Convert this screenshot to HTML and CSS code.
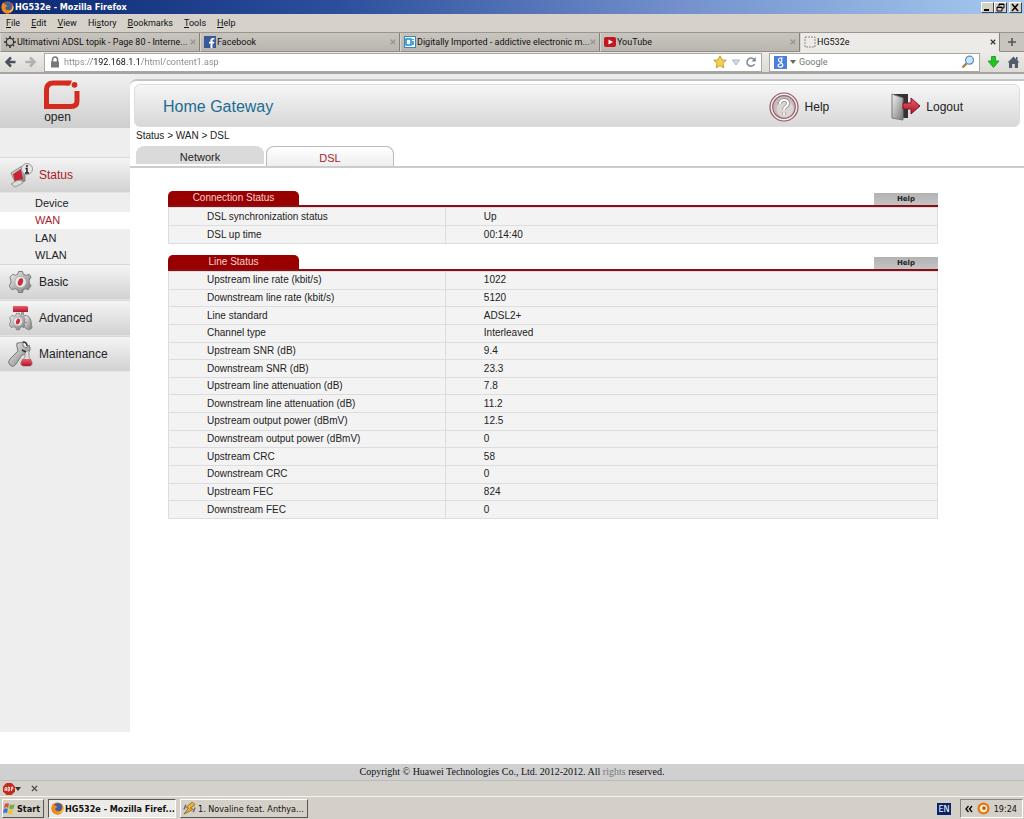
FILE: index.html
```html
<!DOCTYPE html>
<html lang="en">
<head>
<meta charset="utf-8">
<title>HG532e</title>
<link rel="stylesheet" href="styles.css">
</head>
<body>
<svg class="defs" aria-hidden="true">
  <defs>
    <linearGradient id="metal" x1="0" y1="0" x2="1" y2="1"><stop offset="0" stop-color="#f4f4f4"/><stop offset="1" stop-color="#777"/></linearGradient>
    <linearGradient id="red" x1="0" y1="0" x2="0" y2="1"><stop offset="0" stop-color="#e8606c"/><stop offset="1" stop-color="#b01428"/></linearGradient>
    <symbol id="firefox" viewBox="0 0 16 16">
      <circle cx="8" cy="8" r="7.5" fill="#d9661a"/>
      <circle cx="8.5" cy="6.5" r="5" fill="#3f5f9e"/>
      <path d="M1 5C0 12 4 15.500 8 15.500s8-4 7-9c0 4-3 5-5 5-4 0-6-2-4-4l2-1-2-2C4 4 3 3 3 1.500 1.500 3 1 5 1 5z" fill="#f08a1c"/>
      <path d="M14 4c1 5-1 8-5 9 5 1 7-3 6-7z" fill="#ffd34a"/>
    </symbol>
    <symbol id="close" viewBox="0 0 8 8"><path d="M1 1l6 6M7 1L1 7" stroke="currentColor" stroke-width="1.500"/></symbol>
    <symbol id="gear" viewBox="0 0 24 24">
      <path d="M10 1h4l1 3 3 1 3-1 2 3-2 3v3l2 3-3 4-3-1-2 1-1 3h-4l-1-3-3-1-3 1-3-4 2-3v-3L1 7l3-3 3 1 2-1z" fill="url(#metal)" stroke="#777"/>
      <circle cx="12" cy="12" r="6" fill="#e9e9e9" stroke="#aaa"/>
      <ellipse cx="12" cy="12" rx="2.600" ry="4" fill="#c4303e" transform="rotate(18 12 12)"/>
    </symbol>
  </defs>
</svg>

<header class="browser">
  <div class="titlebar">
    <svg class="ico"><use href="#firefox"/></svg>
    <span class="title">HG532e - Mozilla Firefox</span>
    <div class="winbtns">
      <button aria-label="Minimize"><svg viewBox="0 0 11 9"><path d="M2 7h5" stroke="#000" stroke-width="2"/></svg></button>
      <button aria-label="Restore"><svg viewBox="0 0 11 9"><path d="M4 3V1h5v4H7M2 4h5v4H2zM2 4.500h5M4 1.500h5" fill="none" stroke="#000"/></svg></button>
      <button aria-label="Close"><svg viewBox="0 0 11 9"><path d="M2 1l6 7M8 1L2 8" stroke="#000" stroke-width="1.500"/></svg></button>
    </div>
  </div>
  <nav class="menubar">
    <button><u>F</u>ile</button><button><u>E</u>dit</button><button><u>V</u>iew</button><button>Hi<u>s</u>tory</button><button><u>B</u>ookmarks</button><button><u>T</u>ools</button><button><u>H</u>elp</button>
  </nav>
  <div class="tabs">
    <div class="tab"><svg class="fav" viewBox="0 0 12 12"><circle cx="6" cy="6" r="3.700" fill="none" stroke="#333" stroke-width="1.300"/><path d="M6 0v2M6 10v2M0 6h2M10 6h2M2 2l1 1M9 9l1 1M10 2L9 3M3 9l-1 1" stroke="#333" stroke-width="1.600"/></svg><button class="name">Ultimativni ADSL topik - Page 80 - Interne...</button><button class="x" aria-label="Close tab"><svg><use href="#close"/></svg></button></div>
    <div class="tab"><svg class="fav" viewBox="0 0 12 12"><rect width="12" height="12" fill="#3b5998"/><path d="M8.500 12V7.500H10l.3-1.800H8.500V4.500c0-.6.300-1 1-1h1V2H9C7.300 2 6.500 3 6.500 4.300v1.400H5v1.800h1.500V12z" fill="#fff"/></svg><button class="name">Facebook</button><button class="x" aria-label="Close tab"><svg><use href="#close"/></svg></button></div>
    <div class="tab"><svg class="fav" viewBox="0 0 12 12"><rect x=".5" y=".5" width="11" height="11" fill="#fff" stroke="#2b8cc8"/><path d="M2 3h5v6H2zM9 3v1M9 5v4" fill="none" stroke="#2b8cc8" stroke-width="1.600"/></svg><button class="name">Digitally Imported - addictive electronic m...</button><button class="x" aria-label="Close tab"><svg><use href="#close"/></svg></button></div>
    <div class="tab"><svg class="fav" viewBox="0 0 12 12"><rect y="1" width="12" height="10" rx="2" fill="#c1171d"/><path d="M4.500 3.500v5L9 6z" fill="#fff"/></svg><button class="name">YouTube</button><button class="x" aria-label="Close tab"><svg><use href="#close"/></svg></button></div>
    <div class="tab active"><svg class="fav" viewBox="0 0 12 12"><rect x="1" y="1" width="10" height="10" fill="none" stroke="#888" stroke-dasharray="2 1"/></svg><button class="name">HG532e</button><button class="x" aria-label="Close tab"><svg><use href="#close"/></svg></button></div>
    <button class="newtab" aria-label="New tab"><svg viewBox="0 0 10 10"><path d="M5 1v8M1 5h8" stroke="#555" stroke-width="1.600"/></svg></button>
  </div>
  <div class="navbar">
    <button class="tool" aria-label="Back"><svg viewBox="0 0 12 12"><path d="M6.500 1.500L2 6l4.500 4.500M2 6h9" fill="none" stroke="#48525e" stroke-width="2.500"/></svg></button>
    <button class="tool" aria-label="Forward"><svg viewBox="0 0 12 12"><path d="M5.500 1.500L10 6l-4.500 4.500M10 6H1" fill="none" stroke="#b0b0ae" stroke-width="2.500"/></svg></button>
    <div class="field url">
      <svg viewBox="0 0 12 12"><path d="M3.500 6V3.500a2.500 2.500 0 0 1 5 0V6" fill="none" stroke="#777" stroke-width="1.500"/><rect x="2" y="5.500" width="8" height="6" fill="#777"/></svg>
      <input type="text" aria-label="Address" value="https://192.168.1.1/html/content1.asp">
      <svg class="star" viewBox="0 0 14 14"><path d="M7 .8l1.900 4 4.400.5-3.300 3 .9 4.500L7 10.600l-3.900 2.200.9-4.500-3.300-3 4.400-.5z" fill="#f8d04c" stroke="#b89020" stroke-width=".8"/></svg>
      <svg viewBox="0 0 12 12"><path d="M2.500 4h7L6 9z" fill="#dde" stroke="#9aa4b0" stroke-width=".8"/></svg>
      <svg viewBox="0 0 12 12"><path d="M9.500 8A4 4 0 1 1 9 3.500" fill="none" stroke="#7c8894" stroke-width="1.500"/><path d="M10.800 1v4.500H6.500z" fill="#7c8894"/></svg>
    </div>
    <div class="field search">
      <svg class="goo" viewBox="0 0 13 13"><rect width="13" height="13" fill="#4a7fdc"/><path d="M8.800 2H6.500a2 2 0 1 0 0 4c1.500 0 2-2.500.5-4M6.500 6c0 1 2.300 1.200 2.300 3 0 2.700-4.800 2.700-4.800.5S7 8 7 7.500" fill="none" stroke="#fff" stroke-width="1.200"/></svg>
      <svg class="dd" viewBox="0 0 6 6"><path d="M0 1h6L3 5z" fill="#666"/></svg>
      <input type="text" aria-label="Search" placeholder="Google">
      <svg class="star" viewBox="0 0 14 14"><path d="M6 8L1.500 12.500" stroke="#b07a48" stroke-width="2.400"/><circle cx="8.500" cy="5.200" r="4" fill="#cbe6fa" stroke="#5d8fc0" stroke-width="1.200"/></svg>
    </div>
    <button class="tool" aria-label="Downloads"><svg viewBox="0 0 12 12"><path d="M4 .5h4V5h3.500L6 11.500.5 5H4z" fill="#23c423" stroke="#149514" stroke-width=".8"/></svg></button>
    <button class="tool" aria-label="Home"><svg viewBox="0 0 12 12"><path d="M6 .5L0 6.500h1.500V12h3.200V8h2.600v4h3.200V6.500H12L10 4.500V1H8.500v2z" fill="#525c68"/></svg></button>
  </div>
</header>

<div class="page">
  <aside class="side">
    <div class="logo">
      <svg viewBox="0 0 38 31"><path d="M25.500 3H10.500Q3.500 3 3.500 10V26.500H28Q34 26.500 34 21V11" fill="none" stroke="#d52b1e" stroke-width="5"/><path d="M25 .5h4l-2 5h-4z" fill="#d52b1e"/><circle cx="31.500" cy="4.800" r="2.900" fill="#d52b1e"/></svg>
      <span>open</span>
    </div>
    <nav class="nav">
      <a class="main on" href="#"><svg viewBox="0 0 26 26"><path d="M3 11l11-7 3 3v12L8 22z" fill="url(#metal)" stroke="#888"/><path d="M5 12l8-5 2 10-8 3z" fill="#c42638"/><path d="M8 19l-5 3 4 3 8-4-2-3z" fill="#ddd" stroke="#999"/><circle cx="19" cy="7" r="5.500" fill="#e6e6e6" stroke="#999"/><path d="M19 3v2M17.500 6.500H19V11M17 11h4" stroke="#222" stroke-width="1.500" fill="none"/></svg>Status</a>
      <div class="sub"><a href="#">Device</a><a class="on" href="#">WAN</a><a href="#">LAN</a><a href="#">WLAN</a></div>
      <a class="main" href="#"><svg viewBox="0 0 26 26"><use href="#gear" x="1" y="1" width="23" height="24"/></svg>Basic</a>
      <a class="main" href="#"><svg viewBox="0 0 26 26"><use href="#gear" x="1" y="7" width="18" height="19"/><path d="M5 1h14q2 1 1 3v3H5z" fill="url(#red)"/><path d="M13 7h3v3h-3z" fill="#999"/><path d="M16 11q5-2 7 5l1 7-3 2-4-2-1-5 3-1" fill="url(#metal)" stroke="#888"/></svg>Advanced</a>
      <a class="main" href="#"><svg viewBox="0 0 26 26"><path d="M11 2l4-1v4l3 2 3-3q3 5-2 9l-5 1-6 9q-3 4-6 1-3-3 0-6l8-8q-2-6-1-8z" fill="url(#metal)" stroke="#777"/><path d="M17 10h4v6l3 5q1 4-3 4h-5q-4 0-3-4l4-5z" fill="#ddd" stroke="#999"/><path d="M14 18h9l1 4q0 3-3 3h-5q-3 0-3-3z" fill="url(#red)"/><path d="M15 1q4 0 4 4M14 9l4 2" stroke="#333" stroke-width="1.600" fill="none"/></svg>Maintenance</a>
    </nav>
  </aside>

  <main class="panel">
    <div class="banner">
      <h1>Home Gateway</h1>
      <a href="#"><svg viewBox="0 0 30 30"><circle cx="15" cy="15" r="14" fill="#f7eff0" stroke="#8d5a60" stroke-width="1.200"/><circle cx="15" cy="15" r="11.300" fill="#c8babb" stroke="#94666b" stroke-width="1.200"/><circle cx="16" cy="17" r="8.500" fill="#dcd4d5"/><path d="M11 12q0-4 4-4t4 3.500q0 2-2.500 3.500-1.500 1-1.500 3M15 20.500v2.200" fill="none" stroke="#888" stroke-width="3.600"/><path d="M11 12q0-4 4-4t4 3.500q0 2-2.500 3.500-1.500 1-1.500 3M15 20.500v2.200" fill="none" stroke="#fff" stroke-width="2.200"/></svg>Help</a>
      <a href="#"><svg viewBox="-1 0 30 30"><path d="M1 2h16v24H1z" fill="#333"/><path d="M1 2l11 4v22L1 26z" fill="url(#metal)" stroke="#777"/><path d="M12 11h8V6l9 8-9 8v-5h-8z" fill="url(#red)" stroke="#7d1824"/></svg>Logout</a>
    </div>
    <p class="crumbs">Status &gt; WAN &gt; DSL</p>
    <nav class="ptabs"><a href="#">Network</a><a class="on" href="#">DSL</a></nav>

    <div class="content">
      <section>
        <div class="head"><h2>Connection Status</h2><button>Help</button></div>
        <table class="short">
          <tr><th scope="row">DSL synchronization status</th><td>Up</td></tr>
          <tr><th scope="row">DSL up time</th><td>00:14:40</td></tr>
        </table>
      </section>
      <section>
        <div class="head"><h2>Line Status</h2><button>Help</button></div>
        <table class="long">
          <tr><th scope="row">Upstream line rate (kbit/s)</th><td>1022</td></tr>
          <tr><th scope="row">Downstream line rate (kbit/s)</th><td>5120</td></tr>
          <tr><th scope="row">Line standard</th><td>ADSL2+</td></tr>
          <tr><th scope="row">Channel type</th><td>Interleaved</td></tr>
          <tr><th scope="row">Upstream SNR (dB)</th><td>9.4</td></tr>
          <tr><th scope="row">Downstream SNR (dB)</th><td>23.3</td></tr>
          <tr><th scope="row">Upstream line attenuation (dB)</th><td>7.8</td></tr>
          <tr><th scope="row">Downstream line attenuation (dB)</th><td>11.2</td></tr>
          <tr><th scope="row">Upstream output power (dBmV)</th><td>12.5</td></tr>
          <tr><th scope="row">Downstream output power (dBmV)</th><td>0</td></tr>
          <tr><th scope="row">Upstream CRC</th><td>58</td></tr>
          <tr><th scope="row">Downstream CRC</th><td>0</td></tr>
          <tr><th scope="row">Upstream FEC</th><td>824</td></tr>
          <tr><th scope="row">Downstream FEC</th><td>0</td></tr>
        </table>
      </section>
    </div>
  </main>
</div>

<footer class="copy">Copyright © Huawei Technologies Co., Ltd. 2012-2012. All <span>rights</span> reserved.</footer>

<div class="addons">
  <button aria-label="Adblock Plus"><svg viewBox="0 0 12 12"><path d="M3.500 0h5L12 3.500v5L8.500 12h-5L0 8.500v-5z" fill="#c62a1c"/><path d="M2 8V5q1-2 1.700 0v3M2 6.500h1.700M5.200 8V4h1l.6 1-.6 1 .8 1-.8 1zM8.500 8V4h1.300v2H8.500" fill="none" stroke="#fff" stroke-width=".8"/></svg><svg class="dd" viewBox="0 0 6 6"><path d="M0 1h6L3 5z" fill="#333"/></svg></button>
  <button aria-label="Close add-on bar"><svg class="sx"><use href="#close"/></svg></button>
</div>

<div class="taskbar">
  <button class="start"><svg viewBox="0 0 14 14"><path d="M2 2q2.500-1.500 4.500 0L5.500 6.500Q3.500 5 1 6.500z" fill="#e0522c"/><path d="M7.500 2.500q2 1.500 5 0L11.500 7q-3 1.500-5 0z" fill="#6cb33f"/><path d="M.8 7.500q2.500-1.500 4.500 0L4.300 12Q2.300 10.500 0 12z" fill="#3c74d4"/><path d="M6.300 8q2 1.500 5 0l-1 4.500q-3 1.500-5 0z" fill="#f4c430"/></svg>Start</button>
  <button class="task on"><svg><use href="#firefox"/></svg>HG532e - Mozilla Firef...</button>
  <button class="task"><svg viewBox="0 0 14 14"><path d="M10 0L3 6l3 .5L1 13l10-5-3-1.500L13 3z" fill="#f0b030" stroke="#7a5a20" stroke-width=".8"/><path d="M3 3L1 8M11 11l2-5" stroke="#667" stroke-width="1.500"/></svg>1. Novaline feat. Anthya...</button>
  <span class="lang">EN</span>
  <div class="tray"><svg class="chev" viewBox="0 0 8 8"><path d="M3.500 1L1 4l2.500 3M7 1L4.500 4 7 7" fill="none" stroke="#000" stroke-width="1.300"/></svg><svg viewBox="0 0 14 14"><circle cx="7" cy="7" r="6.500" fill="#e07818"/><circle cx="7" cy="7" r="4" fill="#fff0c8"/><circle cx="7.500" cy="6.500" r="2" fill="#c45a10"/></svg><time>19:24</time></div>
</div>
</body>
</html>
```
FILE: styles.css
```css
* { box-sizing: border-box; }
body {
  margin: 0;
  min-height: 100vh;
  display: flex;
  flex-direction: column;
  background: #fff;
  color: #222;
  font: 10px/12px "Liberation Sans", Arial, sans-serif;
}
button, input { font: inherit; color: inherit; border: 0; padding: 0; margin: 0; background: none; }
a { color: inherit; text-decoration: none; }
svg { display: block; flex: none; }
.defs { position: absolute; width: 0; height: 0; }

.browser { font: 9px/12px Roboto, Tahoma, sans-serif; color: #111; background: #d6d2ca; }
.taskbar { font: 9px/12px "DejaVu Sans Condensed", Tahoma, sans-serif; color: #111; }
.titlebar {
  display: flex; align-items: center; height: 14px; padding: 0 2px 0 1px;
  background: linear-gradient(to right, #0c2874, #2c4f9c 33%, #7390cc 66%, #a6caf0);
  color: #fff; font: bold 9px/12px "DejaVu Sans Condensed", Tahoma, sans-serif;
}
.ico { width: 13px; height: 13px; margin-right: 1px; }
.title { flex: 1; }
.winbtns { display: flex; }
.winbtns button { width: 13px; height: 11px; background: #d4d0c8; border: 1px solid; border-color: #fff #444 #444 #fff; }
.winbtns button:last-child { margin-left: 2px; }
.winbtns svg { width: 11px; height: 9px; }
.menubar { display: flex; gap: 11px; height: 18px; padding: 0 6px; }

.tabs { display: flex; height: 20px; border-top: 1px solid #99968f; }
.tab {
  flex: 1; min-width: 0; display: flex; align-items: center; padding: 0 3px;
  background: linear-gradient(#c8c5be, #b9b6af);
  border-right: 1px solid #85827c; border-bottom: 1px solid #908d87; border-left: 1px solid #d8d5ce;
}
.fav { width: 12px; height: 12px; margin-right: 1px; }
.name { flex: 1; min-width: 0; text-align: left; white-space: nowrap; }
.x { color: #96938d; }
.x svg { width: 6px; height: 6px; }
.tab.active { background: #ecebe8; border-bottom-color: #ecebe8; }
.active .x { color: #333; }
.newtab { width: 24px; display: grid; place-items: center; background: #c8c5be; border-bottom: 1px solid #908d87; }
.newtab svg { width: 10px; height: 10px; }
.navbar {
  display: flex; align-items: center; gap: 7px; height: 22px; padding: 0 4px;
  background: linear-gradient(#ecebe8, #dddbd6); border-bottom: 2px solid #a6a4a0;
}
.tool svg { width: 13px; height: 12px; }
.field { display: flex; align-items: center; gap: 3px; height: 19px; padding: 0 4px; background: #fff; border: 1px solid #aaa7a1; }
.field svg { width: 12px; height: 12px; }
.field .star { width: 14px; height: 14px; }
.field .dd, .dd { width: 6px; height: 6px; }
.field input { flex: 1; min-width: 0; height: 14px; outline: 0; }
.url { flex: 1; }
.url input {
  color: transparent;
  background: linear-gradient(to right, #888 28px, #111 28px, #111 76px, #888 76px);
  background-clip: text; -webkit-background-clip: text;
}
.search { width: 211px; }
.search .goo { width: 13px; height: 13px; }
.search input::placeholder { color: #777; opacity: 1; }

.page { flex: 1; display: flex; padding-bottom: 32px; background: linear-gradient(#ececec, #ececec) top / 100% 12px no-repeat #fff; }
.side { width: 130px; background: #eee; }
.logo {
  display: flex; flex-direction: column; align-items: center; height: 54px; padding: 6px 7px 0 0;
  background: linear-gradient(#f0f0f0, #cecece); font-size: 12px;
}
.logo svg { width: 38px; height: 31px; }
.logo span { margin-right: 8px; }
.nav { margin-top: 29px; }
.main {
  display: flex; align-items: center; gap: 5px; height: 36px; padding-left: 8px;
  background: linear-gradient(#f4f4f4, #d2d2d2); border-bottom: 1px solid #e4e4e4;
  border-top: 1px solid #d8d8d8; font-size: 12px;
}
.main svg { width: 26px; height: 26px; }
.main.on, .sub .on { color: #a81c2c; }
.sub { display: flex; flex-direction: column; height: 71px; padding-top: 1px; font-size: 11px; }
.sub a { flex: 1; display: flex; align-items: center; padding-left: 35px; }
.sub .on { background: #fff; }

.panel { flex: 1; min-width: 0; margin-top: 5px; padding: 3px 0 0; background: #fff; border-top: 2px solid #c4c4c4; border-top-left-radius: 7px; }
.banner {
  display: flex; align-items: center; height: 43px; margin: 0 4px 0 4px; padding: 3px 56px 0 28px;
  border: 1px solid #dcdcdc; border-radius: 6px; background: linear-gradient(#f6f6f6, #d8d8d8); font-size: 12px;
}
.banner h1 { flex: 1; margin: 0; font: 16px/20px "Liberation Sans", Arial, sans-serif; color: #1c6c94; }
.banner a { display: flex; align-items: center; gap: 6px; }
.banner a + a { margin-left: 61px; }
.banner svg { width: 30px; height: 30px; }
.crumbs { margin: 3px 6px 4px; }
.ptabs { display: flex; gap: 2px; height: 22px; padding-left: 6px; border-bottom: 2px solid #ccc; font-size: 11px; }
.ptabs a { width: 128px; height: 18px; display: grid; place-items: center; padding-top: 4px; background: #dadada; border-radius: 8px 8px 0 0; }
.ptabs .on { height: 20px; padding-top: 3px; color: #a81c2c; background: linear-gradient(#fff, #eee); border: 1px solid #bbb; border-bottom: 0; }

.content { margin: 24px 86px 0 38px; }
section { margin-bottom: 12px; }
.head { display: flex; justify-content: space-between; align-items: flex-end; height: 15px; border-bottom: 2px solid #8c0d16; }
.head h2 { width: 131px; height: 14px; margin: 0; font: 10px/14px "Liberation Sans", Arial, sans-serif; color: #f6d0d0; background: #980000; border-radius: 5px 5px 0 0; text-align: center; }
.head button { width: 64px; height: 12px; background: linear-gradient(#b2b2b2, #c4c4c4); font: bold 7px/12px "DejaVu Sans", Verdana, sans-serif; }
table { width: 100%; border-collapse: collapse; background: #f3f3f3; }
.short { height: 37px; }
.long { height: 248px; }
th, td { padding: 0 38px; border: 1px solid #ddd; text-align: left; font-weight: normal; }
th { width: 36%; }

.copy { height: 16px; background: #d0d0d0; text-align: center; font: 10px/16px "Liberation Serif", "Times New Roman", serif; color: #111; }
.copy span { color: #777; }
.addons { display: flex; align-items: center; gap: 10px; height: 16px; padding: 0 3px; background: #d4d0ca; border-top: 1px solid #bbb; }
.addons button { display: flex; align-items: center; }
.addons svg { width: 12px; height: 12px; }
.addons .dd { width: 6px; height: 6px; }
.addons .sx { width: 7px; height: 7px; color: #444; }
.taskbar { display: flex; align-items: center; gap: 4px; height: 23px; padding: 1px 1px 0 2px; background: #d4d0c8; border-top: 1px solid #f4f2ee; }
.start, .task { display: flex; align-items: center; gap: 2px; height: 19px; padding: 0 2px; border: 1px solid; border-color: #fff #555 #555 #fff; white-space: nowrap; }
.taskbar svg { width: 13px; height: 13px; }
.start { width: 42px; gap: 1px; padding: 0; font-weight: bold; }
.task { width: 128px; }
.task.on { gap: 1px; font-weight: bold; background: #ecebe7; border-color: #555 #fff #fff #555; }
.lang { margin-left: auto; padding: 0 1px; background: #0a246a; color: #fff; }
.tray { display: flex; align-items: center; gap: 4px; height: 19px; margin-left: 5px; padding: 0 5px 0 4px; border: 1px solid; border-color: #888 #fff #fff #888; }
.tray .chev { width: 8px; height: 8px; }
```
